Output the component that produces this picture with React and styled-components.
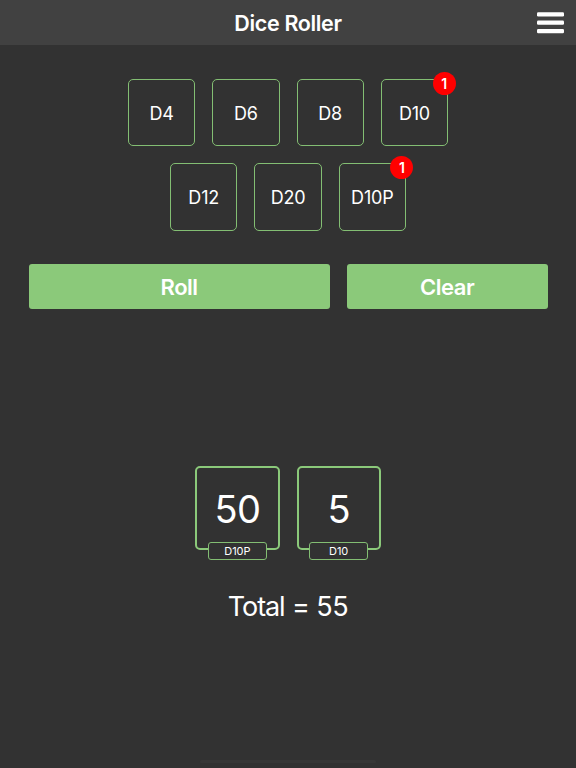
import React from "react";
import styled, { createGlobalStyle } from "styled-components";

const GlobalStyle = createGlobalStyle`
  * { box-sizing: border-box; }
  body { margin: 0; background: #323232; }
`;
const Page = styled.div`
  display: flex;
  flex-direction: column;
  align-items: center;
  width: 576px;
  height: 768px;
  overflow: hidden;
  background: #323232;
  color: #fff;
  font-family: Inter, sans-serif;
`;
const Header = styled.header`
  display: grid;
  grid-template-columns: 50px 1fr 50px;
  align-items: center;
  width: 100%;
  height: 45px;
  background: #414141;
`;
const Title = styled.h1`
  grid-column: 2;
  margin: 0;
  text-align: center;
  font-size: 21.5px;
  line-height: 28px;
  font-weight: 600;
  letter-spacing: -0.35px;
`;
const MenuButton = styled.button`
  display: flex;
  padding: 0;
  border: 0;
  background: none;
  svg { display: block; }
`;
const DiceRow = styled.div`
  display: flex;
  gap: 17px;
  margin-top: ${(p) => p.$top}px;
`;
const Die = styled.button`
  position: relative;
  display: flex;
  align-items: center;
  justify-content: center;
  width: 67.3px;
  height: 67.3px;
  padding: 2px 0 0;
  border: 1.2px solid #83be73;
  border-radius: 5px;
  background: none;
  color: #fff;
  font: 400 18px/24px Inter, sans-serif;
  letter-spacing: -0.2px;
`;
const Badge = styled.span`
  position: absolute;
  top: -8px;
  right: -8.5px;
  width: 23px;
  height: 23px;
  border-radius: 50%;
  background: #f00;
  text-align: center;
  font-size: 14px;
  line-height: 23px;
  font-weight: 600;
`;
const Actions = styled.div`
  display: flex;
  gap: 17px;
  width: 519px;
  margin-top: 33.7px;
`;
const Action = styled.button`
  flex: ${(p) => p.$grow} 1 0;
  height: 45px;
  padding: 0;
  border: 0;
  border-radius: 3px;
  background: #8bc97a;
  color: #fff;
  font: 600 22px/28px Inter, sans-serif;
  letter-spacing: -0.5px;
`;
const Results = styled.div`
  display: flex;
  gap: 17px;
  margin-top: 157px;
`;
const Result = styled.div`
  position: relative;
  display: flex;
  align-items: center;
  justify-content: center;
  width: 84.3px;
  height: 84px;
  padding-top: 1px;
  border: 2px solid #8bc97a;
  border-radius: 5px;
  font-size: 38px;
  letter-spacing: -0.8px;
`;
const ResultLabel = styled.span`
  position: absolute;
  left: 10.4px;
  bottom: -12px;
  width: 59.5px;
  height: 18px;
  border: 1px solid #83be73;
  border-radius: 3px;
  background: #323232;
  text-align: center;
  font-size: 11px;
  line-height: 16px;
  letter-spacing: -0.1px;
`;
const Total = styled.div`
  display: flex;
  gap: 7.5px;
  margin-top: 39px;
  font-size: 27px;
  line-height: 36px;
  letter-spacing: -1.1px;
`;
const TotalValue = styled.span`
  letter-spacing: -0.5px;
`;
const HomeIndicator = styled.div`
  width: 176px;
  height: 3px;
  margin-top: auto;
  margin-bottom: 5px;
  border-radius: 2px;
  background: #373737;
`;
const DieButton = ({ name, count }) => (
  <Die>{name}{count && <Badge>{count}</Badge>}</Die>
);

export default function App() {
  return (
    <Page>
      <GlobalStyle />
      <Header>
        <Title>Dice Roller</Title>
        <MenuButton aria-label="Menu">
          <svg width="50" height="45" viewBox="0 0 50 45" fill="#fff">
            <rect x="11" y="12.2" width="27" height="4.2" rx="1.2" />
            <rect x="11" y="20.6" width="27" height="4.2" rx="1.2" />
            <rect x="11" y="29" width="27" height="4.2" rx="1.2" />
          </svg>
        </MenuButton>
      </Header>
      <DiceRow $top={34}>
        <DieButton name="D4" />
        <DieButton name="D6" />
        <DieButton name="D8" />
        <DieButton name="D10" count={1} />
      </DiceRow>
      <DiceRow $top={17}>
        <DieButton name="D12" />
        <DieButton name="D20" />
        <DieButton name="D10P" count={1} />
      </DiceRow>
      <Actions>
        <Action $grow={3}>Roll</Action>
        <Action $grow={2}>Clear</Action>
      </Actions>
      <Results>
        <Result>50<ResultLabel>D10P</ResultLabel></Result>
        <Result>5<ResultLabel>D10</ResultLabel></Result>
      </Results>
      <Total>
        <span>Total</span>
        <span>=</span>
        <TotalValue>55</TotalValue>
      </Total>
      <HomeIndicator />
    </Page>
  );
}
